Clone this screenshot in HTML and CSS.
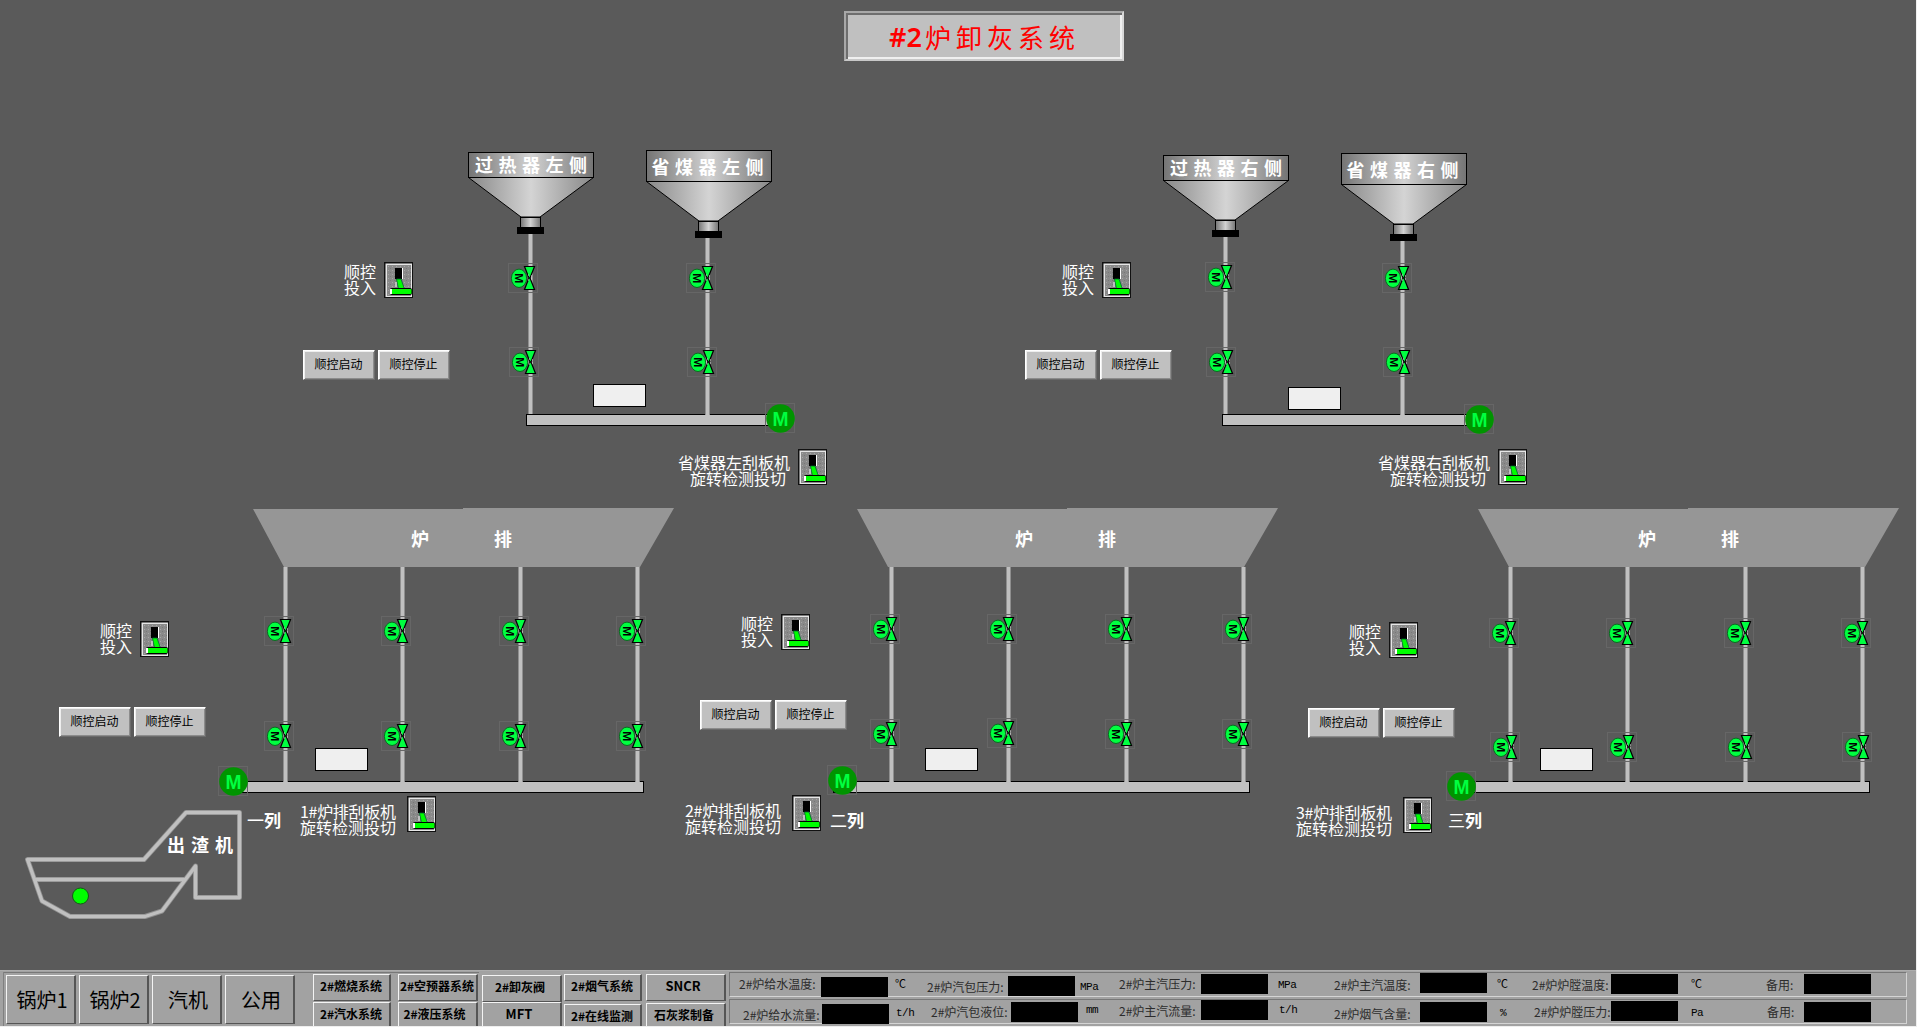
FILE: index.html
```html
<!DOCTYPE html>
<html lang="zh-CN">
<head>
<meta charset="utf-8">
<title>#2炉卸灰系统</title>
<link rel="stylesheet" href="styles.css">
</head>
<body>
<main class="canvas">
<svg class="mimic" width="1916" height="970" viewBox="0 0 1916 970">
  <defs>
    <linearGradient id="steel" x1="0" x2="1" y1="0" y2="0">
      <stop offset="0" stop-color="#747474"/><stop offset=".5" stop-color="#d2d2d2"/><stop offset="1" stop-color="#747474"/>
    </linearGradient>
    <linearGradient id="cone" x1="0" x2="1" y1="0" y2="0">
      <stop offset="0" stop-color="#888"/><stop offset=".5" stop-color="#d4d4d4"/><stop offset="1" stop-color="#888"/>
    </linearGradient>
    <pattern id="dither" width="4" height="4" patternUnits="userSpaceOnUse">
      <rect width="4" height="4" fill="#8a8a8a"/><rect width="1" height="1" fill="#a6a6a6"/><rect x="2" y="2" width="1" height="1" fill="#777"/>
    </pattern>
    <g id="hopper-a">
      <path d="M.5 25.5 L53 65 H72 L125.5 25.5Z" fill="url(#cone)" stroke="#000"/>
      <rect x=".5" y=".5" width="125" height="25" fill="url(#steel)" stroke="#000"/>
      <rect x="52.5" y="65.5" width="20" height="10" fill="url(#steel)" stroke="#000"/>
      <rect x="49" y="75" width="27" height="7"/>
    </g>
    <g id="hopper-b">
      <path d="M.5 31.5 L53 71 H72 L125.5 31.5Z" fill="url(#cone)" stroke="#000"/>
      <rect x=".5" y=".5" width="125" height="31" fill="url(#steel)" stroke="#000"/>
      <rect x="52.5" y="71.5" width="20" height="10" fill="url(#steel)" stroke="#000"/>
      <rect x="49" y="81" width="27" height="7"/>
    </g>
    <g id="valve">
      <rect x=".5" y=".5" width="29" height="29" fill="none" stroke="#666"/>
      <ellipse cx="11" cy="15.3" rx="7.6" ry="9.2" fill="#00ff40" stroke="#0a6a20"/>
      <text class="valve-m" transform="translate(7 10.2) rotate(90)" textLength="10" lengthAdjust="spacingAndGlyphs">M</text>
      <path d="M16.5 3.5 H26.5 L22 15 L26.5 26.5 H16.5 L21 15Z" fill="#00ff40" stroke="#000" stroke-width="1.2"/>
      <path d="M20 11.5h1v1h-1zM23 12.5h1v1h-1zM20 16.5h1v1h-1zM23 15.5h1v1h-1z" fill="#d8d8d8"/>
    </g>
    <g id="motor">
      <rect x=".5" y=".5" width="29" height="29" fill="none" stroke="#666"/>
      <circle cx="15.5" cy="15.5" r="14.3" fill="#009400"/>
      <text class="motor-m" x="7.500" y="22.500" textLength="16" lengthAdjust="spacingAndGlyphs">M</text>
    </g>
    <g id="switch">
      <rect width="29" height="36" fill="#111"/>
      <rect x="1.5" y="1.5" width="26.5" height="33.5" fill="#e6e6e6"/>
      <rect x="3" y="3" width="24" height="31" fill="url(#dither)"/>
      <rect x="11" y="6" width="8" height="20" fill="#fff"/>
      <rect x="11" y="6" width="7" height="12"/>
      <path d="M11 17h8v9h-8z" fill="#808080"/>
      <path d="M12.5 17h4.5l3.500 10h-6z" fill="#0f0" stroke="#063" stroke-width=".8"/>
      <path d="M12 20v5" stroke="#fff"/>
      <rect x="6" y="26" width="22" height="7" rx="2" fill="#000"/>
      <rect x="6.5" y="27" width="21" height="5" rx="1" fill="#0f0"/>
      <rect x="6" y="27" width="2" height="5" fill="#fff"/>
    </g>
    <g id="pipe-short"><rect width="5" height="181" fill="#8f8f8f"/><rect x="1" width="3" height="181" fill="#c0c0c0"/></g>
    <g id="pipe-long"><rect width="5" height="215" fill="#8f8f8f"/><rect x="1" width="3" height="215" fill="#c0c0c0"/></g>
    <g id="display"><rect x=".5" y=".5" width="52" height="22" fill="#efefef" stroke="#000"/></g>
    <path id="grate" d="M253 509H463V508H674L640 567H284Z" fill="#969696"/>
    <g id="sequence"><use href="#switch" x="39"/><text class="thin" x="-1" y="15.500" textLength="32">顺控</text><text class="thin" x="-1" y="31.500" textLength="32">投入</text></g>
  </defs>

  <!-- superheater / economizer, left -->
  <g fill="#c0c0c0" stroke="#000"><rect x="526.5" y="414.500" width="245" height="11"/><rect x="1222.500" y="414.500" width="245" height="11"/></g>
  <use href="#pipe-short" x="528" y="233"/><use href="#pipe-short" x="705" y="234"/>
  <use href="#hopper-a" x="468" y="152"/><use href="#hopper-b" x="646" y="150"/>
  <text class="kai" x="475" y="171.500" textLength="112">过热器左侧</text>
  <text class="kai" x="651.500" y="174" textLength="112">省煤器左侧</text>
  <use href="#valve" x="508" y="263"/><use href="#valve" x="509" y="347"/>
  <use href="#valve" x="686" y="263"/><use href="#valve" x="687" y="347"/>
  <use href="#display" x="593" y="384"/><use href="#motor" x="765" y="403"/>
  <use href="#sequence" x="345" y="262"/>
  <use href="#switch" x="798" y="449"/>
  <text class="thin" x="678" y="469" textLength="112">省煤器左刮板机</text>
  <text class="thin" x="690" y="485" textLength="96">旋转检测投切</text>

  <!-- superheater / economizer, right -->
  <use href="#pipe-short" x="1223" y="233"/><use href="#pipe-short" x="1400" y="234"/>
  <use href="#hopper-a" x="1163" y="155"/><use href="#hopper-b" x="1341" y="153"/>
  <text class="kai" x="1170" y="174.500" textLength="112">过热器右侧</text>
  <text class="kai" x="1346.500" y="177" textLength="112">省煤器右侧</text>
  <use href="#valve" x="1205" y="262"/><use href="#valve" x="1206" y="347"/>
  <use href="#valve" x="1382" y="263"/><use href="#valve" x="1383" y="347"/>
  <use href="#display" x="1288" y="387"/><use href="#motor" x="1464" y="404"/>
  <use href="#sequence" x="1063" y="262"/>
  <use href="#switch" x="1498" y="449"/>
  <text class="thin" x="1378" y="469" textLength="112">省煤器右刮板机</text>
  <text class="thin" x="1390" y="485" textLength="96">旋转检测投切</text>

  <!-- grate conveyors -->
  <g fill="#c0c0c0" stroke="#000">
    <rect x="240.500" y="781.500" width="403" height="11"/>
    <rect x="833.500" y="781.500" width="416" height="11"/>
    <rect x="1466.500" y="781.500" width="403" height="11"/>
  </g>

  <!-- column 1 -->
  <use href="#grate"/>
  <text class="kai" x="411" y="546">炉</text><text class="kai" x="494" y="546">排</text>
  <use href="#pipe-long" x="283" y="567"/><use href="#pipe-long" x="400" y="567"/><use href="#pipe-long" x="518" y="567"/><use href="#pipe-long" x="635" y="567"/>
  <use href="#valve" x="264" y="616"/><use href="#valve" x="381" y="616"/><use href="#valve" x="499" y="616"/><use href="#valve" x="616" y="616"/>
  <use href="#valve" x="264" y="721"/><use href="#valve" x="381" y="721"/><use href="#valve" x="499" y="721"/><use href="#valve" x="616" y="721"/>
  <use href="#display" x="315" y="748"/><use href="#motor" x="218" y="766"/>
  <use href="#sequence" x="101" y="621"/>
  <use href="#switch" x="407" y="796"/>
  <text class="thin" x="300" y="818" textLength="96">1#炉排刮板机</text>
  <text class="thin" x="300" y="834" textLength="96">旋转检测投切</text>
  <text class="row-no" x="247" y="827">一<tspan class="row-word">列</tspan></text>

  <!-- column 2 -->
  <use href="#grate" x="604"/>
  <text class="kai" x="1015" y="546">炉</text><text class="kai" x="1098" y="546">排</text>
  <use href="#pipe-long" x="889" y="567"/><use href="#pipe-long" x="1006" y="567"/><use href="#pipe-long" x="1124" y="567"/><use href="#pipe-long" x="1241" y="567"/>
  <use href="#valve" x="870" y="614"/><use href="#valve" x="987" y="614"/><use href="#valve" x="1105" y="614"/><use href="#valve" x="1222" y="614"/>
  <use href="#valve" x="870" y="719"/><use href="#valve" x="987" y="718"/><use href="#valve" x="1105" y="719"/><use href="#valve" x="1222" y="719"/>
  <use href="#display" x="925" y="748"/><use href="#motor" x="827" y="765"/>
  <use href="#sequence" x="742" y="614"/>
  <use href="#switch" x="792" y="795"/>
  <text class="thin" x="685" y="817" textLength="96">2#炉排刮板机</text>
  <text class="thin" x="685" y="833" textLength="96">旋转检测投切</text>
  <text class="row-no" x="830" y="827">二<tspan class="row-word">列</tspan></text>

  <!-- column 3 -->
  <use href="#grate" x="1225"/>
  <text class="kai" x="1638" y="546">炉</text><text class="kai" x="1721" y="546">排</text>
  <use href="#pipe-long" x="1508" y="567"/><use href="#pipe-long" x="1625" y="567"/><use href="#pipe-long" x="1743" y="567"/><use href="#pipe-long" x="1860" y="567"/>
  <use href="#valve" x="1489" y="618"/><use href="#valve" x="1606" y="618"/><use href="#valve" x="1724" y="618"/><use href="#valve" x="1841" y="618"/>
  <use href="#valve" x="1490" y="732"/><use href="#valve" x="1607" y="732"/><use href="#valve" x="1725" y="732"/><use href="#valve" x="1842" y="732"/>
  <use href="#display" x="1540" y="748"/><use href="#motor" x="1446" y="771"/>
  <use href="#sequence" x="1350" y="622"/>
  <use href="#switch" x="1403" y="797"/>
  <text class="thin" x="1296" y="819" textLength="96">3#炉排刮板机</text>
  <text class="thin" x="1296" y="835" textLength="96">旋转检测投切</text>
  <text class="row-no" x="1448" y="827">三<tspan class="row-word">列</tspan></text>

  <!-- slag extractor -->
  <g fill="none" stroke-linejoin="round" stroke-linecap="round">
    <path d="M27.500 859.500H144L186 812.500H239.500V897.500H195.500V866L162 911L145 916.500H70L42 901Z M36 879.500H184" stroke="#8f8f8f" stroke-width="5"/>
    <path d="M27.500 859.500H144L186 812.500H239.500V897.500H195.500V866L162 911L145 916.500H70L42 901Z M36 879.500H184" stroke="#c0c0c0" stroke-width="3.400"/>
  </g>
  <circle cx="80.500" cy="896" r="8" fill="#0f0" stroke="#175517"/>
  <text class="kai" x="167" y="851.500" textLength="66">出渣机</text>
</svg>

<h1 class="title"><span class="title-no">#2</span><span class="title-name">炉卸灰系统</span></h1>

<div class="controls controls-ul"><button class="key">顺控启动</button><button class="key">顺控停止</button></div>
<div class="controls controls-ur"><button class="key">顺控启动</button><button class="key">顺控停止</button></div>
<div class="controls controls-c1"><button class="key">顺控启动</button><button class="key">顺控停止</button></div>
<div class="controls controls-c2"><button class="key">顺控启动</button><button class="key">顺控停止</button></div>
<div class="controls controls-c3"><button class="key">顺控启动</button><button class="key">顺控停止</button></div>
</main>

<footer class="dock">
  <nav class="nav">
    <div class="areas">
      <button class="area">锅炉1</button><button class="area">锅炉2</button><button class="area">汽机</button><button class="area">公用</button>
    </div>
    <div class="pages">
      <button class="page">2#燃烧系统</button><button class="page wide">2#空预器系统</button><button class="page wide low">2#卸灰阀</button><button class="page">2#烟气系统</button><button class="page wide latin">SNCR</button>
      <button class="page">2#汽水系统</button><button class="page wide shift">2#液压系统</button><button class="page wide latin">MFT</button><button class="page low2">2#在线监测</button><button class="page wide low">石灰浆制备</button>
    </div>
  </nav>
  <section class="readings">
    <div class="strip strip-top">
      <span class="name n0">2#炉给水温度:</span><span class="val v4"></span><span class="unit u1">℃</span>
      <span class="name n3">2#炉汽包压力:</span><span class="val v3"></span><span class="unit u2">MPa</span>
      <span class="name n0">2#炉主汽压力:</span><span class="val v1"></span><span class="unit u1">MPa</span>
      <span class="name n1">2#炉主汽温度:</span><span class="val"></span><span class="unit u1">℃</span>
      <span class="name n1">2#炉炉膛温度:</span><span class="val v1"></span><span class="unit u1">℃</span>
      <span class="name n1">备用:</span><span class="val v1"></span>
    </div>
    <div class="strip strip-bottom">
      <span class="name n4">2#炉给水流量:</span><span class="val v4"></span><span class="unit u3">t/h</span>
      <span class="name n2">2#炉汽包液位:</span><span class="val v2"></span><span class="unit u0">mm</span>
      <span class="name n0">2#炉主汽流量:</span><span class="val"></span><span class="unit u0">t/h</span>
      <span class="name n3">2#炉烟气含量:</span><span class="val v2"></span><span class="unit u3">%</span>
      <span class="name n2">2#炉炉膛压力:</span><span class="val v1"></span><span class="unit u3">Pa</span>
      <span class="name n2">备用:</span><span class="val v2"></span>
    </div>
  </section>
</footer>
</body>
</html>
```
FILE: styles.css
```css
* { box-sizing: border-box; }

body {
  margin: 0;
  width: 1917px;
  height: 1027px;
  overflow: hidden;
  background: #5a5a5a;
  border-right: 1px solid #eee;
  border-bottom: 1px solid #eee;
  font-family: "Noto Sans CJK SC", "Noto Sans", sans-serif;
}

button {
  margin: 0;
  padding: 0;
  color: #000;
  font-family: inherit;
  white-space: nowrap;
}

/* process canvas */
.canvas { position: relative; width: 1916px; height: 970px; }
.mimic { display: block; }

.thin { font-size: 16px; font-weight: 400; fill: #fff; }
.kai { font-family: KaiTi, "Noto Sans CJK SC", sans-serif; font-size: 18px; font-weight: 700; fill: #fff; }
.row-no { font-size: 17px; font-weight: 400; fill: #fff; }
.row-word { font-weight: 700; }
.valve-m { font: 700 11px "Liberation Sans", sans-serif; fill: #000; }
.motor-m { font: 700 21px "Liberation Sans", sans-serif; fill: #00ff40; }

.title {
  position: absolute;
  left: 844px;
  top: 11px;
  width: 280px;
  height: 50px;
  margin: 0;
  display: flex;
  align-items: center;
  padding-left: 43px;
  background: #c0c0c0;
  border: 2px solid;
  border-color: #a8a8a8 #d8d8d8 #c8c8c8 #a8a8a8;
  box-shadow: inset 2px 2px #6e6e6e, inset -2px -2px #f0f0f0;
  color: #f00;
  font-weight: 400;
}
.title-no { width: 36px; font: 600 27px "Noto Sans", sans-serif; }
.title-name { font-family: KaiTi, "Noto Sans CJK SC", sans-serif; font-size: 26px; letter-spacing: 5px; }

.controls { position: absolute; display: flex; gap: 3px; }
.controls-ul { left: 303px; top: 350px; }
.controls-ur { left: 1025px; top: 350px; }
.controls-c1 { left: 59px; top: 707px; }
.controls-c2 { left: 700px; top: 700px; }
.controls-c3 { left: 1308px; top: 708px; }

.key {
  width: 72px;
  height: 30px;
  padding: 0 1px 2px 0;
  background: #c0c0c0;
  border: 1px solid;
  border-color: #fff #6c6c6c #6c6c6c #fff;
  box-shadow: inset 1px 1px #eee, inset -1px -1px #8c8c8c;
  font-size: 12px;
  line-height: 12px;
}

/* bottom dock */
.dock {
  display: flex;
  width: 1916px;
  height: 56px;
  background: #a2a2a2;
  border-top: 1px solid #adadad;
  overflow: hidden;
}

.nav {
  display: flex;
  width: 726px;
  margin: 1px 0 0 3px;
  border-left: 1px solid #808080;
  background: linear-gradient(#787878, #787878) 0 0 / 475px 1px no-repeat;
}

.areas { display: flex; gap: 3px; width: 309px; padding: 3px 0 0 2px; }
.area {
  width: 70px;
  height: 49px;
  padding: 1px 0 0 3px;
  background: #a2a2a2;
  border: 1px solid;
  border-color: #f4f4f4 #555 #555 #f4f4f4;
  border-right-width: 2px;
  font-size: 20px;
  line-height: 20px;
}

.pages {
  display: grid;
  grid-template-columns: 85px 84px 82px 82px 80px;
  grid-template-rows: 27px 27px;
  row-gap: 1px;
  padding-top: 2px;
}
.page {
  width: 78px;
  height: 27px;
  padding: 0 1px 3px 0;
  background: #a2a2a2;
  border: 1px solid;
  border-color: #f4f4f4 #555 #555 #f4f4f4;
  border-right-width: 2px;
  font-size: 12px;
  font-weight: 600;
  line-height: 12px;
}
.wide { width: 80px; }
.latin { padding-right: 5px; font-size: 13px; }
.low { margin-top: 1px; padding-right: 3px; }
.low2 { margin-top: 2px; }
.shift { padding-right: 6px; }

.readings { width: 1178px; padding-top: 1px; }
.strip {
  display: grid;
  height: 25px;
  margin-bottom: 2px;
  border: 1px solid;
  border-color: #777 #d4d4d4 #d4d4d4 #777;
}
.strip-top { padding-left: 9px; grid-template-columns: 82px 74px 32px 81px 72px 39px 82px 77px 56px 86px 77px 35px 79px 80px 75px 38px 67px; }
.strip-bottom { padding-left: 13px; grid-template-columns: 79px 74px 35px 80px 75px 33px 82px 78px 55px 86px 80px 34px 77px 80px 76px 37px 67px; }

.name {
  height: 14px;
  color: #2c2c2c;
  font-size: 12px;
  line-height: 14px;
  white-space: nowrap;
}
.n0 { margin-top: 4px; }
.n1 { margin-top: 5px; }
.n2 { margin-top: 5px; }
.n3 { margin-top: 7px; }
.n4 { margin-top: 8px; }

.unit {
  height: 12px;
  color: #000;
  font: 11px/12px "Liberation Mono", "Noto Sans CJK SC", monospace;
  letter-spacing: -.5px;
}
.u0 { margin-top: 4px; }
.u1 { margin-top: 6px; }
.u2 { margin-top: 8px; }
.u3 { margin-top: 7px; }

.val { width: 67px; height: 20px; background: #000; }
.v1 { margin-top: 1px; }
.v2 { margin-top: 2px; }
.v3 { margin-top: 3px; }
.v4 { margin-top: 4px; }
```
